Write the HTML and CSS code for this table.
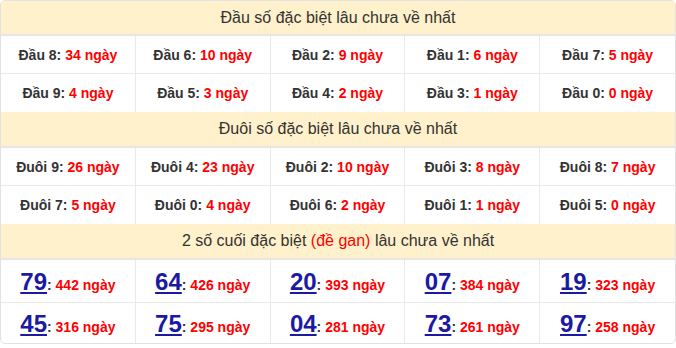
FILE: index.html
```html
<!DOCTYPE html>
<html lang="vi">
<head>
<meta charset="utf-8">
<title>Thống kê</title>
<link rel="stylesheet" href="styles.css">
</head>
<body>
<div class="box">
  <div class="head first">Đầu số đặc biệt lâu chưa về nhất</div>
  <div class="grid">
    <div class="cell"><span>Đầu 8: <span class="red">34 ngày</span></span></div>
    <div class="cell"><span>Đầu 6: <span class="red">10 ngày</span></span></div>
    <div class="cell"><span>Đầu 2: <span class="red">9 ngày</span></span></div>
    <div class="cell"><span>Đầu 1: <span class="red">6 ngày</span></span></div>
    <div class="cell"><span>Đầu 7: <span class="red">5 ngày</span></span></div>
    <div class="cell"><span>Đầu 9: <span class="red">4 ngày</span></span></div>
    <div class="cell"><span>Đầu 5: <span class="red">3 ngày</span></span></div>
    <div class="cell"><span>Đầu 4: <span class="red">2 ngày</span></span></div>
    <div class="cell"><span>Đầu 3: <span class="red">1 ngày</span></span></div>
    <div class="cell"><span>Đầu 0: <span class="red">0 ngày</span></span></div>
  </div>
  <div class="head">Đuôi số đặc biệt lâu chưa về nhất</div>
  <div class="grid">
    <div class="cell"><span>Đuôi 9: <span class="red">26 ngày</span></span></div>
    <div class="cell"><span>Đuôi 4: <span class="red">23 ngày</span></span></div>
    <div class="cell"><span>Đuôi 2: <span class="red">10 ngày</span></span></div>
    <div class="cell"><span>Đuôi 3: <span class="red">8 ngày</span></span></div>
    <div class="cell"><span>Đuôi 8: <span class="red">7 ngày</span></span></div>
    <div class="cell"><span>Đuôi 7: <span class="red">5 ngày</span></span></div>
    <div class="cell"><span>Đuôi 0: <span class="red">4 ngày</span></span></div>
    <div class="cell"><span>Đuôi 6: <span class="red">2 ngày</span></span></div>
    <div class="cell"><span>Đuôi 1: <span class="red">1 ngày</span></span></div>
    <div class="cell"><span>Đuôi 5: <span class="red">0 ngày</span></span></div>
  </div>
  <div class="head">2 số cuối đặc biệt <span class="gan">(đề gan)</span> lâu chưa về nhất</div>
  <div class="grid big">
    <div class="cell"><span><a class="num" href="#">79</a>: <span class="red">442 ngày</span></span></div>
    <div class="cell"><span><a class="num" href="#">64</a>: <span class="red">426 ngày</span></span></div>
    <div class="cell"><span><a class="num" href="#">20</a>: <span class="red">393 ngày</span></span></div>
    <div class="cell"><span><a class="num" href="#">07</a>: <span class="red">384 ngày</span></span></div>
    <div class="cell"><span><a class="num" href="#">19</a>: <span class="red">323 ngày</span></span></div>
    <div class="cell"><span><a class="num" href="#">45</a>: <span class="red">316 ngày</span></span></div>
    <div class="cell"><span><a class="num" href="#">75</a>: <span class="red">295 ngày</span></span></div>
    <div class="cell"><span><a class="num" href="#">04</a>: <span class="red">281 ngày</span></span></div>
    <div class="cell"><span><a class="num" href="#">73</a>: <span class="red">261 ngày</span></span></div>
    <div class="cell"><span><a class="num" href="#">97</a>: <span class="red">258 ngày</span></span></div>
  </div>
</div>
</body>
</html>
```
FILE: styles.css
```css
html, body {
  margin: 0;
  padding: 0;
  background: #fff;
}
body {
  font-family: "Liberation Sans", Arial, sans-serif;
  color: #333;
}
.box {
  width: 676px;
  box-sizing: border-box;
  border: 1px solid #e2e2e2;
  border-radius: 5px;
  overflow: hidden;
}
.head {
  height: 34px;
  line-height: 34px;
  background: #fef1cb;
  text-align: center;
  font-size: 16px;
  color: #333;
  border-bottom: 2px solid #e6e6e6;
}
.head.first {
  height: 33px;
  line-height: 33px;
}
.gan {
  color: #f00;
}
.grid {
  display: grid;
  grid-template-columns: repeat(5, 1fr);
  grid-auto-rows: 38px;
}
.cell {
  display: flex;
  align-items: center;
  justify-content: center;
  font-size: 14px;
  font-weight: bold;
  color: #333;
  border-right: 1px solid #eaeaea;
  white-space: nowrap;
}
.cell:nth-child(5n) {
  border-right: none;
}
.cell:nth-child(-n+5) {
  border-bottom: 1px solid #eaeaea;
}
.red {
  color: #f00;
}
.grid.big {
  grid-template-rows: 43px 40px;
}
.big .cell {
  font-size: 14px;
  padding-top: 2px;
}
.num {
  font-size: 24px;
  font-weight: bold;
  color: #1a1aa3;
  text-decoration: underline;
  text-underline-offset: 2px;
}
```
